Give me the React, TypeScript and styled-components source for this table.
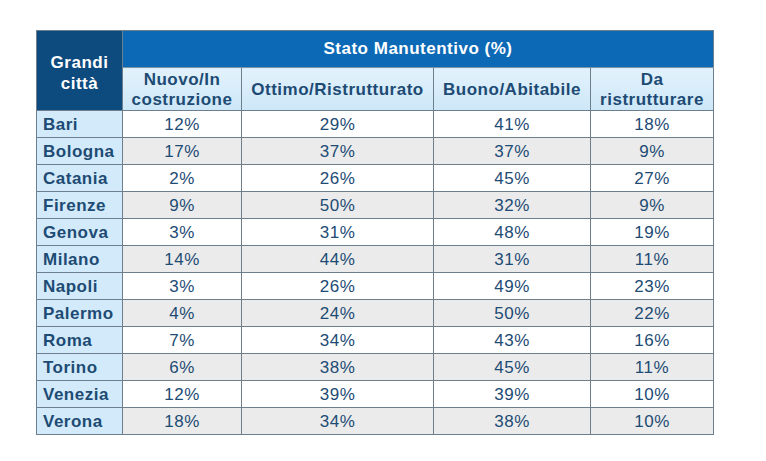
import React from "react";
import styled, { createGlobalStyle } from "styled-components";

const Global = createGlobalStyle`
  html, body { margin: 0; padding: 0; background: #ffffff; }
  body { font-family: "Liberation Sans", Arial, sans-serif; }
`;

const Page = styled.div`
  width: 766px;
  height: 461px;
  padding: 30px 0 0 36px;
  box-sizing: border-box;
`;

const Table = styled.table`
  border-collapse: collapse;
  table-layout: fixed;
  width: 677px;
  font-family: "Liberation Sans", Arial, sans-serif;
  font-size: 17px;
  letter-spacing: 0.5px;
  color: #1d4b74;
  border: 1px solid #6d7f8c;
`;

const CornerHead = styled.th`
  background: #0d4a7e;
  color: #ffffff;
  font-weight: bold;
  line-height: 21px;
  text-align: center;
  vertical-align: middle;
  padding: 5px 2px 0;
  border: 1px solid #6d7f8c;
`;

const GroupHead = styled.th`
  background: #0c69b5;
  color: #ffffff;
  font-weight: bold;
  height: 36px;
  padding: 0;
  text-align: center;
  border: 1px solid #6d7f8c;
  border-bottom-color: #7d95a6;
`;

const SubHead = styled.th`
  background: linear-gradient(#e3f2fc, #cde7f8);
  color: #1d4b74;
  font-weight: bold;
  line-height: 20px;
  height: 39px;
  padding: 2px 1px 0;
  text-align: center;
  white-space: nowrap;
  border: 1px solid #6d7f8c;
`;

const Row = styled.tr<{ $alt: boolean }>`
  background: ${(p) => (p.$alt ? "#ebebeb" : "#ffffff")};
`;

const CityCell = styled.td`
  background: #d3eafa;
  font-weight: bold;
  text-align: left;
  padding: 2px 0 0 6px;
  height: 24px;
  white-space: nowrap;
  border: 1px solid #6d7f8c;
`;

const ValueCell = styled.td`
  text-align: center;
  padding: 2px 0 0;
  height: 24px;
  border: 1px solid #6d7f8c;
`;

const data: [string, number, number, number, number][] = [
  ["Bari", 12, 29, 41, 18],
  ["Bologna", 17, 37, 37, 9],
  ["Catania", 2, 26, 45, 27],
  ["Firenze", 9, 50, 32, 9],
  ["Genova", 3, 31, 48, 19],
  ["Milano", 14, 44, 31, 11],
  ["Napoli", 3, 26, 49, 23],
  ["Palermo", 4, 24, 50, 22],
  ["Roma", 7, 34, 43, 16],
  ["Torino", 6, 38, 45, 11],
  ["Venezia", 12, 39, 39, 10],
  ["Verona", 18, 34, 38, 10],
];

export default function App() {
  return (
    <>
      <Global />
      <Page>
        <Table>
          <colgroup>
            <col style={{ width: 86 }} />
            <col style={{ width: 119 }} />
            <col style={{ width: 192 }} />
            <col style={{ width: 157 }} />
            <col style={{ width: 123 }} />
          </colgroup>
          <thead>
            <tr>
              <CornerHead rowSpan={2}>
                Grandi
                <br />
                città
              </CornerHead>
              <GroupHead colSpan={4}>Stato Manutentivo (%)</GroupHead>
            </tr>
            <tr>
              <SubHead>
                Nuovo/In
                <br />
                costruzione
              </SubHead>
              <SubHead>Ottimo/Ristrutturato</SubHead>
              <SubHead>Buono/Abitabile</SubHead>
              <SubHead>
                Da
                <br />
                ristrutturare
              </SubHead>
            </tr>
          </thead>
          <tbody>
            {data.map(([city, a, b, c, d], i) => (
              <Row key={city} $alt={i % 2 === 1}>
                <CityCell>{city}</CityCell>
                <ValueCell>{a}%</ValueCell>
                <ValueCell>{b}%</ValueCell>
                <ValueCell>{c}%</ValueCell>
                <ValueCell>{d}%</ValueCell>
              </Row>
            ))}
          </tbody>
        </Table>
      </Page>
    </>
  );
}
